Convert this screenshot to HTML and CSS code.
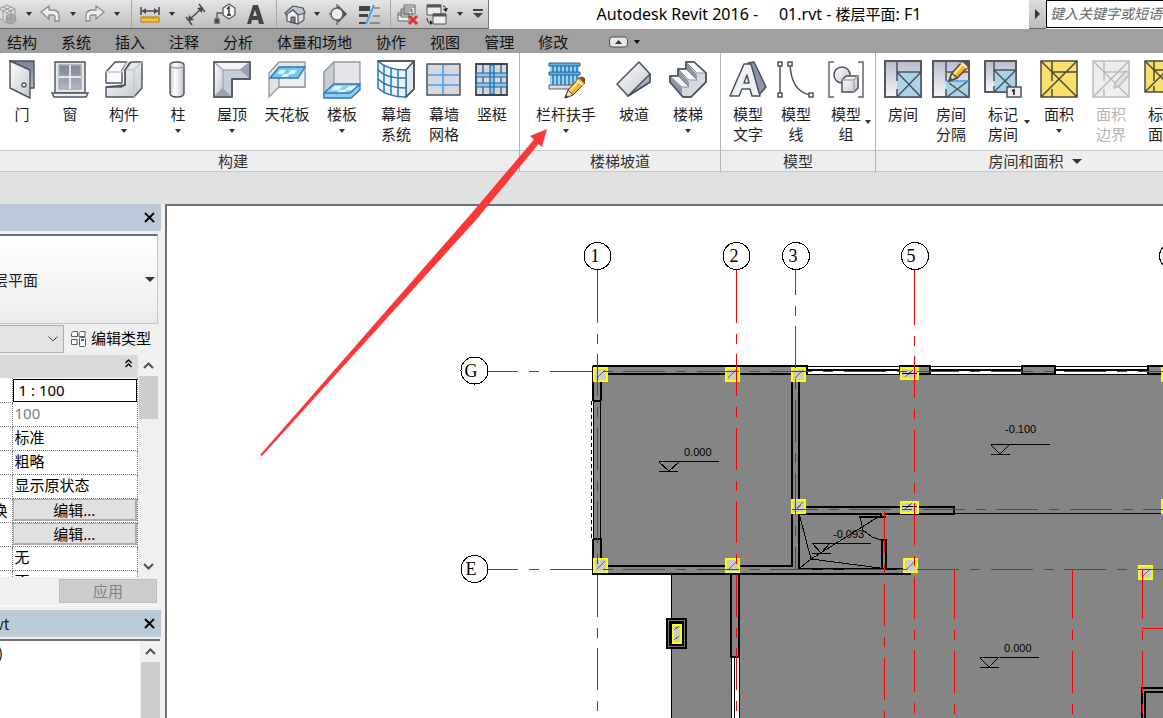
FILE: index.html
```html
<!DOCTYPE html>
<html lang="zh-CN">
<head>
<meta charset="utf-8">
<title>Autodesk Revit 2016</title>
<link rel="stylesheet" href="styles.css">
</head>
<body>
<svg class="defs" width="0" height="0" aria-hidden="true">
  <defs>
    <linearGradient id="metal" x1="0" y1="0" x2="1" y2="1"><stop offset="0" stop-color="#fff"/><stop offset="1" stop-color="#c3c7ce"/></linearGradient>
    <linearGradient id="dark" x1="0" y1="0" x2="0" y2="1"><stop offset="0" stop-color="#7b8494"/><stop offset="1" stop-color="#b4bac5"/></linearGradient>
    <linearGradient id="cyl" x1="0" y1="0" x2="1" y2="0"><stop offset="0" stop-color="#c5c9d0"/><stop offset=".35" stop-color="#fff"/><stop offset="1" stop-color="#c0c4cc"/></linearGradient>
    <linearGradient id="side" x1="0" y1="0" x2="0" y2="1"><stop offset="0" stop-color="#b9bdca"/><stop offset="1" stop-color="#f6f6f8"/></linearGradient>
    <g id="pencil"><path d="M0 17 3 9 14 -3q2-2 5 0t1 5L8 14z" fill="#f5b324" stroke="#5c4a28"/><path d="m14-3 5 5 1-1q1-3-1-4-3-2-5 0z" fill="#8e4a17"/><path d="m12-1 6 5" stroke="#eee" stroke-width="2"/><path d="m0 17 3-8 5 5z" fill="#f4dfb6" stroke="#5c4a28"/><path d="m0 17 1-3 2 2z" fill="#222"/><path d="M5 10 14 0" stroke="#ffe58f" stroke-width="2"/></g>
  </defs>
</svg>

<header class="titlebar">
  <nav class="quick" aria-label="快速访问工具栏">
    <button class="q" aria-label="同步"><svg width="26" height="24" viewBox="0 0 26 24" fill="none" stroke="#999"><path d="M5 7 13 3l8 4v9l-8 5-8-5z" fill="#ddd"/><path d="m5 7 8 4 8-4M13 11v9M9 5l8 4v9M17 5 9 9v9"/><circle cx="17" cy="17" r="5" fill="#aaa"/><path d="M12 17h10M17 12v10"/></svg></button>
    <button class="a" aria-label="同步选项"><i class="tri"></i></button>
    <button class="q" aria-label="放弃"><svg width="26" height="24" viewBox="0 0 26 24" fill="#eee" stroke="#8c8c8c" stroke-width="1.3"><path d="m3 10 8-6v4h5q5 1 5 6v5h-4v-4q0-2-2-2h-4v4z"/></svg></button>
    <button class="a" aria-label="放弃列表"><i class="tri"></i></button>
    <button class="q" aria-label="重做"><svg width="26" height="24" viewBox="0 0 26 24" fill="#eee" stroke="#8c8c8c" stroke-width="1.3"><path d="m22 10-8-6v4H9q-5 1-5 6v5h4v-4q0-2 2-2h4v4z"/></svg></button>
    <button class="a" aria-label="重做列表"><i class="tri"></i></button>
    <span class="qsep"></span>
    <button class="q" aria-label="测量"><svg width="26" height="24" viewBox="0 0 26 24" fill="none"><path d="M5 9h16M4 5v8M22 5v8" stroke="#444b57" stroke-width="1.6"/><path d="m5 9 4-3v6zM21 9l-4-3v6z" fill="#444b57"/><path d="M4 15h18v5H4z" fill="#ffc233" stroke="#b77c07"/><path d="M7 15v2M10 15v2M13 15v2M16 15v2M19 15v2" stroke="#b77c07"/></svg></button>
    <button class="a" aria-label="测量选项"><i class="tri"></i></button>
    <button class="q wide" aria-label="对齐尺寸标注"><svg width="26" height="24" viewBox="0 0 26 24" fill="none" stroke="#444b57" stroke-width="1.4"><path d="m6 18 13-12M3 15l6 8M16 2l6 8"/><path d="m5 19 1-6 5 5zM20 5l-6 1 5 5z" fill="#444b57" stroke="none"/></svg></button>
    <button class="q wide" aria-label="按类别标记"><svg width="26" height="24" viewBox="0 0 26 24" fill="none" stroke="#555c67" stroke-width="1.3"><path d="m10 6 6-4 6 4v7l-6 4-6-4z" fill="#f3f3f3"/><path d="M10 11H4v6"/><path d="M2 17h4v4H2z" fill="#444"/><path d="m14 7 2-2v8M14 13h4" stroke="#222"/></svg></button>
    <button class="q wide" aria-label="文字"><svg width="26" height="24" viewBox="0 0 26 24"><path d="M4 22 10 3h5l6 19h-5l-1-4H9l-1 4zm6-8h4l-2-6z" fill="#444" fill-rule="evenodd"/></svg></button>
    <span class="qsep"></span>
    <button class="q" aria-label="默认三维视图"><svg width="26" height="24" viewBox="0 0 26 24" stroke="#4c535f" stroke-width="1.2" stroke-linejoin="round"><path d="m5 12 3 8 8 2 6-4v-8l-7-5z" fill="#ddd"/><path d="M3 11 11 4l10 2 2 5-7 2-5-5-6 6z" fill="#bfc5ce"/><path d="M5 12v7l11 3v-9l-5-5z" fill="#f6f6f6"/><path d="M9 15h4v6l-4-1z" fill="#7c8490"/></svg></button>
    <button class="a" aria-label="三维视图选项"><i class="tri"></i></button>
    <button class="q" aria-label="剖面"><svg width="26" height="24" viewBox="0 0 26 24"><path d="m12 3 9 9-9 9z" fill="#444b57"/><circle cx="11" cy="12" r="6" fill="#eee" stroke="#666" stroke-width="1.600"/><path d="M11 2v4M11 18v5M5 12H3" stroke="#444"/></svg></button>
    <button class="q broad" aria-label="细线"><svg width="26" height="24" viewBox="0 0 26 24"><path d="M2 4h11v5H2zM2 12h9v3H2zM2 20h7v2H2z" fill="#444"/><path d="M17 6h6M16 14h7M13 21h10" stroke="#555"/><path d="M17 3 9 22" stroke="#4da2f5" stroke-width="2"/></svg></button>
    <span class="qsep tight"></span>
    <button class="q" aria-label="关闭隐藏窗口"><svg width="26" height="24" viewBox="0 0 26 24" fill="#eee" stroke="#666"><path d="M9 3h11v9H9zM9 5h11M6 7h11v8H6zM6 9h11M3 11h11v8H3zM3 13h11" /><path d="m14 14 8 8M22 14l-8 8" stroke="#d8322b" stroke-width="2.8"/></svg></button>
    <button class="q wide" aria-label="切换窗口"><svg width="26" height="24" viewBox="0 0 26 24" fill="#eee" stroke="#555"><path d="M4 3h14v10H4z"/><path d="M4 4h14" stroke-width="3"/><path d="M10 12h13v10H10z"/><path d="M10 13h13" stroke-width="3"/><path d="M20 4q3 0 3 5M4 16q0 5 4 5" fill="none" stroke="#222"/><path d="m20 7 3 3 2-4zM7 18v5l3-2z" fill="#222" stroke="none"/></svg></button>
    <button class="a" aria-label="窗口列表"><i class="tri"></i></button>
    <button class="a" aria-label="自定义快速访问工具栏"><svg width="12" height="12" viewBox="0 0 12 12" fill="#444"><path d="M1 1h10v2H1zM1 5h10L6 10z"/></svg></button>
  </nav>
  <h1 class="title">Autodesk Revit 2016 -     01.rvt - <span>楼层平面</span>: F1</h1>
  <div class="search">
    <button class="searchtoggle" aria-label="展开"><i class="rtri"></i></button>
    <input type="text" aria-label="搜索" placeholder="键入关键字或短语">
  </div>
</header>

<nav class="tabs">
  <button>结构</button><button>系统</button><button>插入</button><button>注释</button><button>分析</button><button>体量和场地</button><button>协作</button><button>视图</button><button>管理</button><button>修改</button>
  <button class="minimize" aria-label="最小化功能区"><svg width="32" height="14" viewBox="0 0 32 14"><rect x="1.500" y="2" width="18" height="10" rx="3" fill="#e6e8ea" stroke="#4b4f56"/><path d="M7 9h7l-3.500-4z" fill="#333"/><path d="M26 5h6l-3 4z" fill="#111"/></svg></button>
</nav>

<section class="ribbon">
  <div class="panel build">
    <div class="tools">
      <button class="t"><svg width="38" height="40" viewBox="0 0 38 40" stroke="#4b515d" stroke-width="1.400"><path d="M7 1h24v27H20z" fill="url(#dark)"/><path d="m7 1 20 9v28L7 28z" fill="url(#metal)"/><circle cx="21" cy="25" r="2" fill="#fff"/></svg><span>门</span></button>
      <button class="t"><svg width="38" height="40" viewBox="0 0 38 40" stroke="#4b515d" stroke-width="1.400"><path d="M4 2h30v31H4z" fill="#e5e7eb"/><path d="M8 5h22v24H8z" fill="url(#dark)" stroke="#aaa"/><path d="M19 5v24M8 17h22" stroke="#fff"/><path d="M1 33h36l-2 4H3z" fill="#eee"/></svg><span>窗</span></button>
      <button class="t w60"><svg width="38" height="40" viewBox="0 0 38 40" stroke="#4b515d" stroke-width="1.400" stroke-linejoin="round"><path d="M1 27v10h28l8-9V2H26l-6 8v15z" fill="url(#metal)"/><path d="M20 10h9l8-8M29 10v27" fill="none" stroke="#c4c8ce"/><path d="m1 12 9-10h12l-5 8v13H1z" fill="#fafafa"/><path d="M1 12h16l5-10" fill="none" stroke="#c4c8ce"/><path d="M1 27h15l4-2V10l5-8" fill="none"/></svg><span>构件</span><i class="tri"></i></button>
      <button class="t"><svg width="38" height="40" viewBox="0 0 38 40" stroke="#4b515d" stroke-width="1.400"><path d="M11 5q0-3 7-3t7 3v28q0 4-7 4t-7-4z" fill="url(#cyl)"/><path d="M11 5q0 3 7 3t7-3" fill="none" stroke="#999"/></svg><span>柱</span><i class="tri"></i></button>
      <button class="t w60"><svg width="38" height="40" viewBox="0 0 38 40" stroke="#4b515d" stroke-width="1.400"><path d="M1 2h36v17H19v18H1z" fill="#c9cdd5"/><path d="M1 2h36L27 10H10z" fill="#f5f5f7" stroke="#aab"/><path d="m1 2 9 8v18l-9 9z" fill="url(#metal)" stroke="#aab"/><path d="m37 2v17l-10-9zM19 37l-9-9-9 9z" fill="#9aa3b1" stroke="none"/><path d="M1 2h36v17H19v18H1z" fill="none"/></svg><span>屋顶</span><i class="tri"></i></button>
      <button class="t w50"><svg width="38" height="40" viewBox="0 0 38 40" stroke="#94989f" stroke-width="1.300"><path d="M1 13 11 2h26v25H11L1 37z" fill="#e1e3e6"/><path d="M11 17v10h26V12" fill="#eee"/><path d="m11 7h26l-7 11H2z" fill="#7ac4f5" stroke="#2878b8"/><path d="M12 10h6l-3 4H9zM23 10h6l-3 4h-6zM16 14h6l-3 3h-6z" fill="#dff3ff" stroke="none"/></svg><span>天花板</span></button>
      <button class="t w60"><svg width="38" height="40" viewBox="0 0 38 40" stroke="#94989f" stroke-width="1.300"><path d="M1 12 11 2h26v22l-9 13H1z" fill="#e5e6e9"/><path d="M11 2v22L1 33V12z" fill="#c9ccd2"/><path d="M11 24h26v6l-9 8H1v-5z" fill="#8fcdf3" stroke="#2878b8"/><path d="M12 26h8l-4 4H8zM26 26h8l-4 4h-8zM17 30h7l-3 3h-8z" fill="#e4f5ff" stroke="none"/><path d="M1 33h26l10-9" fill="none" stroke="#2878b8"/></svg><span>楼板</span><i class="tri"></i></button>
      <button class="t"><svg width="38" height="40" viewBox="0 0 38 40" stroke="#2878b8" stroke-width="1.500" fill="none"><path d="M1 1h36l-8 9v27l8-8V1" fill="#e6e7ea" stroke="#4b515d"/><path d="M1 1q9 9 28 9v27Q10 37 1 28z" fill="#eef3f8"/><path d="M1 10q9 9 28 8M1 19q9 9 28 9M7 6v27M14 8v27M21 10v27"/><path d="M1 1h36v28l-8 8" stroke="#4b515d"/></svg><span>幕墙<br>系统</span></button>
      <button class="t"><svg width="38" height="40" viewBox="0 0 38 40"><path d="M2 4h33v31H2z" fill="#d5d8dd" stroke="#4b515d" stroke-width="1.500"/><path d="M3 15h31M3 25h31M18 5v29" stroke="#3f9df2" stroke-width="1.500"/></svg><span>幕墙<br>网格</span></button>
      <button class="t"><svg width="38" height="40" viewBox="0 0 38 40"><path d="M3 4h31v31H3z" fill="#d5d8dd" stroke="#3f4550" stroke-width="1.800"/><path d="M10 5v29M28 5v29" stroke="#3f4550" stroke-width="1.200"/><path d="M3 13h31v4H3zM3 23h31v4H3zM17 5h4v29h-4z" fill="#8fc9ea" stroke="#1d6297" stroke-width="1.200"/></svg><span>竖梃</span></button>
    </div>
    <div class="caption">构建</div>
  </div>
  <div class="panel">
    <div class="tools">
      <button class="t w88"><svg width="38" height="40" viewBox="0 0 38 40"><path d="M3 5h29v22H3z" fill="#9ed3f2"/><path d="M6 6v20M10 6v20M14 6v20M18 6v20M22 6v20M26 6v20M30 6v20" stroke="#2474b5" stroke-width="1.500"/><path d="M2 3h31v3H2zM2 12h31v3H2z" fill="#61ade0" stroke="#1c65a5"/><path d="M2 25h29v4H2z" fill="#ddd" stroke="#555b66"/><use href="#pencil" x="18" y="21"/></svg><span>栏杆扶手</span><i class="tri"></i></button>
      <button class="t"><svg width="38" height="40" viewBox="0 0 38 40" stroke="#4b515d" stroke-width="1.500" stroke-linejoin="round"><path d="M2 24 24 2l11 12v8L13 36z" fill="url(#metal)"/><path d="M13 36 35 14v8z" fill="#a9b0bd"/></svg><span>坡道</span></button>
      <button class="t w60"><svg width="38" height="40" viewBox="0 0 38 40" stroke="#4b515d" stroke-width="1.500" stroke-linejoin="round"><path d="M1 16v6l13 15h8l15-15v-9L25 2h-8v7H9v7z" fill="#d5d8dd"/><path d="m1 16 12 12v9L1 22zM9 9l11 13v5L9 16zM17 2l11 13v5L17 9z" fill="#8c96a7" stroke="none"/><path d="M1 16h8l11 11h-7zM9 9h8l11 11h-8zM17 2h8l12 11h-9z" fill="#fafafa" stroke="#8c919b" stroke-width="1"/><path d="M1 16v6l13 15h8l15-15v-9L25 2h-8v7H9v7z" fill="none"/></svg><span>楼梯</span><i class="tri"></i></button>
    </div>
    <div class="caption">楼梯坡道</div>
  </div>
  <div class="panel">
    <div class="tools roomy">
      <button class="t"><svg width="38" height="40" viewBox="0 0 38 40" stroke="#4b515d" stroke-width="1.500" stroke-linejoin="round"><path d="m19 3 6-1 12 25-8 9z" fill="#8c96a7"/><path d="M1 36 15 4h7l9 32h-8l-2-7h-8l-3 7zm14-13h5l-2-8z" fill="#f0f1f3" fill-rule="evenodd"/></svg><span>模型<br>文字</span></button>
      <button class="t"><svg width="38" height="40" viewBox="0 0 38 40" stroke="#4b515d" stroke-width="1.500" fill="none"><path d="M3 4v30M13 4q1 27 20 31"/><path d="M1 2h4v4H1zM1 33h4v4H1zM11 2h4v4h-4zM32 33h4v4h-4z" fill="#fff"/></svg><span>模型<br>线</span></button>
      <button class="t w52"><svg width="38" height="40" viewBox="0 0 38 40" stroke="#4b515d" stroke-width="1.500" fill="none"><path d="M7 2H2v35h5M31 2h5v35h-5" stroke="#666"/><circle cx="15" cy="15" r="8" fill="url(#metal)"/><path d="m15 20 4-4h12v12l-4 4H15z" fill="url(#metal)"/><path d="M15 20h12v12M27 20l4-4" stroke="#aaa"/></svg><span>模型<br>组</span><i class="tri corner"></i></button>
    </div>
    <div class="caption">模型</div>
  </div>
  <div class="panel">
    <div class="tools roomy">
      <button class="t"><svg width="38" height="40" viewBox="0 0 38 40" stroke="#4b515d" stroke-width="1.500" fill="none"><path d="M1 1h36v36H1z" fill="url(#side)"/><path d="M13 12h24v25H13z" fill="#a9d4e8" stroke="none"/><path d="M13 1v20M13 29v8M13 12h24M13 12l24 25M37 12 13 37M1 1h36v36H1z"/></svg><span>房间</span></button>
      <button class="t"><svg width="38" height="40" viewBox="0 0 38 40" stroke="#4b515d" stroke-width="1.500" fill="none"><path d="M1 1h36v36H1z" fill="url(#side)"/><path d="M14 21h23v16H14z" fill="#a9d4e8" stroke="none"/><path d="M14 1v20M14 29v8M14 12h23M17 23l19 14M36 21 15 37M1 1h36v36H1z"/><path d="M14 21h23" stroke="#3f9df2"/><use href="#pencil" x="17" y="4"/></svg><span>房间<br>分隔</span></button>
      <button class="t w56"><svg width="38" height="40" viewBox="0 0 38 40" stroke="#4b515d" stroke-width="1.500" fill="none"><path d="M1 1h31v31H1z" fill="url(#side)"/><path d="M10 10h22v22H10z" fill="#a9d4e8" stroke="none"/><path d="M10 1v20M10 26v6M10 10h22M10 10l22 22M32 10 10 32M1 1h31v31H1z"/><path d="M23 27h14v10H23z" fill="#eee"/><path d="m28 31 2-1v5" stroke="#111"/></svg><span>标记<br>房间</span><i class="tri corner"></i></button>
      <button class="t w56"><svg width="38" height="40" viewBox="0 0 38 40" stroke="#4b4a3d" stroke-width="1.500" fill="none"><path d="M1 1h36v36H1zM1 1l36 36M37 1 1 37M12 1v20M12 29v8M12 12h25" fill="#fbdf6b"/></svg><span>面积</span><i class="tri"></i></button>
      <button class="t" disabled><svg width="38" height="40" viewBox="0 0 38 40" stroke="#bbb" stroke-width="1.500" fill="none"><path d="M1 1h36v36H1zM1 1l36 36M37 1 1 37M12 1v20M12 29v8M12 12h25" fill="#eee"/><path d="m22 28 2-6 10-11 4 3-11 12z" fill="#e3e3e3"/></svg><span>面积<br>边界</span></button>
      <button class="t w56"><svg width="38" height="40" viewBox="0 0 38 40" stroke="#4b4a3d" stroke-width="1.500" fill="none"><path d="M1 1h31v31H1zM1 1l31 31M32 1 1 32M10 1v20M10 26v6M10 10h22" fill="#fbdf6b"/><path d="M21 27h14v10H21z" fill="#eee"/></svg><span>标记<br>面积</span></button>
    </div>
    <div class="caption">房间和面积<i class="tri big"></i></div>
  </div>
</section>

<main class="work">
  <aside class="dock">
    <section class="props">
      <div class="head"><span></span><button aria-label="关闭属性"><svg width="11" height="11" viewBox="0 0 11 11"><path d="m1 1 9 9M10 1l-9 9" stroke="#000" stroke-width="2"/></svg></button></div>
      <button class="type"><span>层平面</span><i class="tri big"></i></button>
      <div class="instance">
        <select aria-label="实例"><option></option></select>
        <button class="edittype"><svg width="17" height="17" viewBox="0 0 17 17" fill="#fff" stroke="#555c67"><path d="M1.500 3.500 3 1.500h4.500v5h-6zM9 3.500l1.500-2H15v5H9zM1.500 9.500H7v5H1.500z"/><rect x="9.500" y="7.500" width="6" height="9" rx="1"/><path d="M11 10h3" stroke="#2c62b4" stroke-width="2"/></svg>编辑类型</button>
      </div>
      <div class="list">
        <div class="listbody">
          <div class="group"><svg width="7" height="9" viewBox="0 0 7 9" fill="none" stroke="#000" stroke-width="1.300"><path d="m.5 4 3-3 3 3M.5 8l3-3 3 3"/></svg></div>
          <table>
            <tr><th></th><td><input class="scale" type="text" aria-label="视图比例" value="1 : 100"></td></tr>
            <tr><th></th><td class="dim">100</td></tr>
            <tr><th></th><td>标准</td></tr>
            <tr><th></th><td>粗略</td></tr>
            <tr><th></th><td>显示原状态</td></tr>
            <tr><th>换</th><td><button class="edit">编辑...</button></td></tr>
            <tr><th></th><td><button class="edit">编辑...</button></td></tr>
            <tr><th></th><td>无</td></tr>
            <tr><th></th><td>否</td></tr>
          </table>
        </div>
        <div class="scroll">
          <svg width="11" height="7" viewBox="0 0 11 7"><path d="m1 6 4.500-4.500L10 6" fill="none" stroke="#505050" stroke-width="2"/></svg>
          <i class="thumb"></i>
          <svg width="11" height="7" viewBox="0 0 11 7"><path d="m1 1 4.500 4.500L10 1" fill="none" stroke="#505050" stroke-width="2"/></svg>
        </div>
      </div>
      <div class="apply"><button disabled>应用</button></div>
    </section>
    <section class="browser">
      <div class="head"><span>vt</span><button aria-label="关闭项目浏览器"><svg width="11" height="11" viewBox="0 0 11 11"><path d="m1 1 9 9M10 1l-9 9" stroke="#000" stroke-width="2"/></svg></button></div>
      <div class="tree">
        <div class="node">)</div>
        <div class="scroll">
          <svg width="11" height="7" viewBox="0 0 11 7"><path d="m1 6 4.500-4.500L10 6" fill="none" stroke="#505050" stroke-width="2"/></svg>
          <i class="thumb rest"></i>
        </div>
      </div>
    </section>
  </aside>

  <div class="canvas">
    <svg class="plan" width="100%" height="100%" role="img" aria-label="楼层平面 F1">
      <g transform="translate(-167 -206)" shape-rendering="crispEdges" fill="none" stroke="#000">
        <path d="M593 366H1400V1000H671V574H593z" fill="#858585" stroke="none"/>
        <!-- windows -->
        <g fill="#fff">
          <path d="M807 366.500h93v8h-93zM930 366.500h92v8h-92zM1055 366.500h93v8h-93z"/>
          <path d="M807 370h93M930 370h92M1055 370h93" stroke-width="2"/>
          <path d="M731.500 657v343M739.500 657v343" />
          <path d="M732 657h7v343h-7z" stroke="none"/>
          <path d="M734.500 657v343"/>
        </g>
        <!-- walls -->
        <g stroke-width="2">
          <path d="M593 366H807V374M807 374h-8M608 374H792V566H608M593 366v35M601 382v19M593 401h8M593 539v35h318M601 558v-19h-8"/>
          <path d="M799 382V569H903M806 507H954V514H885M881 514H799M881 513v4h5M882 570V540h4v30"/>
          <path d="M859 517h22M731 574v83h8v-83"/>
          <path d="M900 366h30v8h-30zM1022 366h33v8h-33zM1163 366h-15v8h15"/>
          <path d="M1163 688h-21v312M1163 692h-18v308"/>
        </g>
        <path d="M593.500 401v138M600.500 401v138M671.500 574v426M954 513.500h446M930 374.500h470"/>
        <path d="M591.500 401v138" stroke-dasharray="4 3"/>
        <!-- stair room -->
        <g>
          <path d="m800 517 11 42 69 9M800 568l11-9 67-42M860 517l3 13 9 7 9 3"/>
          <path d="M812 543.500h59M812 553.500h19M812 543l9 10 9-10"/>
        </g>
        <!-- level marks -->
        <path d="M659 461.500h60M659 471.500h19M659 462l10 9 10-9"/>
        <path d="M991 444.500h59M991 454.500h19M991 445l9 9 9-9"/>
        <path d="M980 657.500h59M980 667.500h19M980 658l9 9 9-9"/>
        <!-- columns -->
        <g stroke="#ff0" stroke-width="2" fill="#ccc">
          <path d="M594 368h13v13h-13zM726 368h13v13h-13zM792 368h13v13h-13zM901 368h17v11h-17zM1162 368h13v13h-13z"/>
          <path d="M792 500h13v13h-13zM901 502h17v11h-17zM1162 500h13v13h-13z"/>
          <path d="M594 559h13v13h-13zM726 559h13v13h-13zM904 559h13v13h-13zM1139 566h13v13h-13z"/>
          <path d="M667 619h19v29h-19z" stroke="#000" fill="#000"/>
          <path d="M668.500 620.500h16v26h-16z" stroke="#777" stroke-width="1" fill="#000"/>
          <path d="M673 625h8v18h-8z"/>
        </g>
        <path d="m597 378 8-8M728 378l8-8M795 378l8-8M905 377l8-7M795 511l8-9M904 510l8-7M597 569l8-8M729 569l8-8M907 569l8-8M1143 576l7-7M674 630l5-4M674 640l5-4" stroke="#666"/>
        <path d="M902 373.500h15M902 506.500h15"/>
        <!-- grid lines -->
        <g stroke="#f00" stroke-dasharray="42 11 10 10.500">
          <path d="M597.500 269v12M736.500 269v12M914.500 269v14" stroke-dasharray="none"/>
          <path d="M597.500 280.500V1000M736.500 280.500V1000M914.500 282.500V1000"/>
          <path d="M795.500 252.500V569"/>
          <path d="M476 371.500H1400M476 569.500H1400"/>
          <path d="M792 509.500H1400" stroke-dashoffset="16.500"/>
          <path d="M884.500 510.500V1000"/>
          <path d="M954.500 577V1000M1072.500 577V1000M1142.500 577V1000"/>
          <path d="M954.500 569v9M1072.500 569v9M1142.500 569v9M1142 628.500H1400" stroke-dasharray="none"/>
        </g>
        <!-- grid heads -->
        <g fill="#fff">
          <circle cx="597.500" cy="256" r="13.500"/><circle cx="736.500" cy="256" r="13.500"/><circle cx="796" cy="256" r="13.500"/><circle cx="915" cy="256" r="13.500"/><circle cx="1173" cy="256" r="13.500"/>
          <circle cx="474.500" cy="370.500" r="13.500"/><circle cx="474.500" cy="569" r="13.500"/>
        </g>
        <g class="heads" fill="#000" stroke="none" text-anchor="middle">
          <text x="595" y="262">1</text><text x="734" y="262">2</text><text x="793" y="262">3</text><text x="911" y="262">5</text><text x="471" y="377">G</text><text x="471" y="575">E</text>
        </g>
        <g class="levels" fill="#000" stroke="none">
          <text x="684" y="456">0.000</text><text x="1005" y="433">-0.100</text><text x="833" y="538">-0.093</text><text x="1004" y="652">0.000</text>
        </g>
      </g>
    </svg>
  </div>
</main>

<svg class="pointer" width="290" height="330" viewBox="260 127 290 330" aria-hidden="true"><path d="m260 455 210-240 64-75.500-4-3.500 17-7-5 18-3.500-3L476 220 262 456z" fill="#fb3838"/></svg>
</body>
</html>
```

FILE: styles.css
```css
* { box-sizing: border-box; }

html, body { height: 100%; }

body {
  margin: 0;
  position: relative;
  display: flex;
  flex-direction: column;
  overflow: hidden;
  background: #e0e1e2;
  color: #1e1e1e;
  font: 15px/20px "Noto Sans CJK SC", sans-serif;
}

.defs { position: absolute; }

button {
  margin: 0;
  padding: 0;
  border: 0;
  background: none;
  color: inherit;
  font: inherit;
}

svg { display: block; flex: none; }

/* small arrows */
.tri {
  flex: none;
  width: 0;
  border: 3px solid transparent;
  border-top: 4px solid #333;
  border-bottom: 0;
}
.tri.big { border-width: 5px 5px 0; }
.rtri {
  border: 5px solid transparent;
  border-left-color: #333;
  border-right: 0;
}

/* title bar */
.titlebar {
  flex: none;
  display: flex;
  height: 29px;
  background: #fff;
}
.quick {
  flex: none;
  display: flex;
  align-items: center;
  width: 495px;
  margin-left: -6px;
  background: linear-gradient(#e6e6e6, #bdbdbd);
  border-right: 1px solid #777;
  border-bottom: 1px solid #666;
}
.q, .a {
  flex: none;
  display: flex;
  align-items: center;
  justify-content: center;
  width: 26px;
  height: 28px;
}
.q.wide { width: 30px; }
.q.broad { width: 36px; }
.a { width: 18px; }
.qsep {
  flex: none;
  width: 1px;
  height: 28px;
  margin: 0 5px;
  background: #a5a5a5;
}
.qsep.tight { margin: 0 4px 0 2px; }
.title {
  flex: 1;
  margin: 0;
  font: 16px/28px "Noto Sans", "Noto Sans CJK SC", sans-serif;
  color: #000;
  text-align: center;
  white-space: pre;
}
.title span { font-size: 15px; }
.search { display: flex; width: 134px; }
.searchtoggle {
  display: flex;
  align-items: center;
  justify-content: center;
  width: 17px;
  flex: none;
  background: linear-gradient(#ddd, #bbb);
  border-bottom: 1px solid #666;
}
.search input {
  flex: 1;
  min-width: 0;
  height: 28px;
  padding: 0 0 2px 3px;
  border: 1px solid #000;
  border-right: 0;
  font: italic 14px/20px "Noto Sans CJK SC", sans-serif;
}
.search input::placeholder { color: #666; }

/* ribbon tabs */
.tabs {
  flex: none;
  display: flex;
  align-items: center;
  gap: 24px;
  height: 24px;
  padding: 2px 7px 0;
  background: #a0a0a0;
  color: #111;
}
.tabs button { flex: none; }
.minimize { margin-left: 16px; }

/* ribbon */
.ribbon {
  flex: none;
  display: flex;
  height: 119px;
  overflow: hidden;
  background: #fff;
}
.panel {
  flex: none;
  display: flex;
  flex-direction: column;
  padding-top: 1px;
  border-right: 1px solid #b5b5b5;
}
.tools {
  flex: 1;
  display: flex;
  padding: 0 2px;
}
.tools.roomy { padding: 0 3px; }
.build { margin-left: -53px; }
.build .tools { padding: 0 3px 0 51px; }
.caption {
  display: flex;
  align-items: center;
  justify-content: center;
  gap: 8px;
  height: 22px;
  background: #eee;
  border-top: 1px solid #c8c8c8;
  border-bottom: 1px solid #c8c8c8;
  color: #333;
}
.t {
  position: relative;
  flex: none;
  display: flex;
  flex-direction: column;
  align-items: center;
  width: 48px;
  padding-top: 6px;
  white-space: nowrap;
}
.t span { margin-top: 4px; }
.t .tri { margin-top: 5px; }
.t .tri.corner {
  position: absolute;
  right: 1px;
  bottom: 26px;
}
.t:disabled { color: #b4b4b4; }
.w50 { width: 50px; }
.w52 { width: 52px; }
.w56 { width: 56px; }
.w60 { width: 60px; }
.w88 { width: 88px; }

/* work area */
.work {
  flex: 1;
  min-height: 0;
  display: flex;
  margin-top: 32px;
}
.dock {
  flex: none;
  display: flex;
  flex-direction: column;
  width: 165px;
  padding-right: 4px;
  background: #f0f0f0;
}
.head {
  flex: none;
  display: flex;
  align-items: center;
  justify-content: space-between;
  height: 27px;
  padding: 0 6px 0 0;
  background: #bccad8;
}
.head span { margin-left: -4px; }
.props {
  flex: none;
  display: flex;
  flex-direction: column;
  margin-bottom: 4px;
  border-bottom: 1px solid #fff;
}
.type {
  display: flex;
  align-items: center;
  justify-content: space-between;
  height: 90px;
  margin: 3px 3px 1px 0;
  padding: 0 2px 0 0;
  border: 1px solid #c4c4c4;
  border-top: 2px solid #707070;
  border-left: 0;
  background: linear-gradient(#fff, #ececec);
}
.type span { margin-left: -7px; }
.instance {
  display: flex;
  align-items: center;
  gap: 6px;
  padding-bottom: 2px;
}
.instance select {
  width: 64px;
  height: 28px;
  appearance: none;
  border: 1px solid #adadad;
  border-left: 0;
  border-radius: 0;
  background: #e3e3e3 url("data:image/svg+xml,%3Csvg xmlns='http://www.w3.org/2000/svg' width='10' height='6'%3E%3Cpath d='m.5.5 4.500 4.500L9.500.5' fill='none' stroke='%23444'/%3E%3C/svg%3E") no-repeat right 5px center;
}
.edittype {
  display: flex;
  align-items: center;
  gap: 4px;
  padding-bottom: 2px;
  color: #000;
  white-space: nowrap;
}
.list {
  display: flex;
  height: 222px;
  margin-right: 3px;
  font-family: "Noto Sans", "Noto Sans CJK SC", sans-serif;
}
.listbody {
  flex: 1;
  overflow: hidden;
  background: #fff;
}
.group {
  display: flex;
  align-items: center;
  justify-content: flex-end;
  height: 23px;
  padding: 0 6px 6px 0;
  background: #dadada;
}
.list table {
  width: 138px;
  border-collapse: collapse;
  table-layout: fixed;
  color: #000;
}
.list tr { height: 24px; }
.list th, .list td {
  height: 24px;
  padding: 0 0 2px 2px;
  border: 1px dotted #777;
  border-width: 0 1px 1px 0;
  font-weight: 400;
  line-height: 20px;
  white-space: nowrap;
}
.list tr:first-child td { border-bottom: 0; }
.list th {
  width: 12px;
  padding: 0 4px 0 0;
  direction: rtl;
  overflow: hidden;
}
.list .dim { color: #7b7b7b; }
.list td:has(input), .list td:has(button) { padding: 0; }
.scale {
  display: block;
  width: 100%;
  height: 23px;
  padding: 0 5px;
  border: 1px solid #000;
  font: inherit;
}
.edit {
  display: block;
  width: 100%;
  height: 22px;
  border: 1px solid #adadad;
  border-right-width: 2px;
  border-bottom-width: 2px;
  background: #e1e1e1;
}
.scroll {
  flex: none;
  display: flex;
  flex-direction: column;
  align-items: center;
  width: 20px;
  padding: 7px 0;
  gap: 7px;
  background: #f0f0f0;
}
.thumb {
  width: 19px;
  height: 43px;
  margin-bottom: auto;
  background: #cdcdcd;
}
.thumb.rest { flex: 1; }
.apply {
  display: flex;
  justify-content: flex-end;
  padding: 2px 4px;
}
.apply button {
  width: 98px;
  height: 24px;
  border: 1px solid #bfbfbf;
  background: #ccc;
  color: #838383;
}
.browser {
  flex: 1;
  min-height: 0;
  display: flex;
  flex-direction: column;
}
.tree {
  flex: 1;
  min-height: 0;
  display: flex;
  margin: 2px 1px 0 0;
  border-top: 2px solid #707070;
  background: #fff;
}
.tree .node {
  flex: 1;
  margin: 2px 0 0 -2px;
  color: #000;
}
.tree .scroll { padding-bottom: 0; }
.canvas {
  flex: 1;
  min-width: 0;
  border-left: 2px solid #707070;
  border-top: 2px solid #707070;
  background: #fff;
}
.plan { overflow: hidden; }
.heads { font: 18px "Liberation Serif", serif; }
.levels { font: 11px "Liberation Sans Narrow", "Liberation Sans", sans-serif; }

/* callout arrow */
.pointer {
  position: absolute;
  left: 260px;
  top: 127px;
  pointer-events: none;
}
```
